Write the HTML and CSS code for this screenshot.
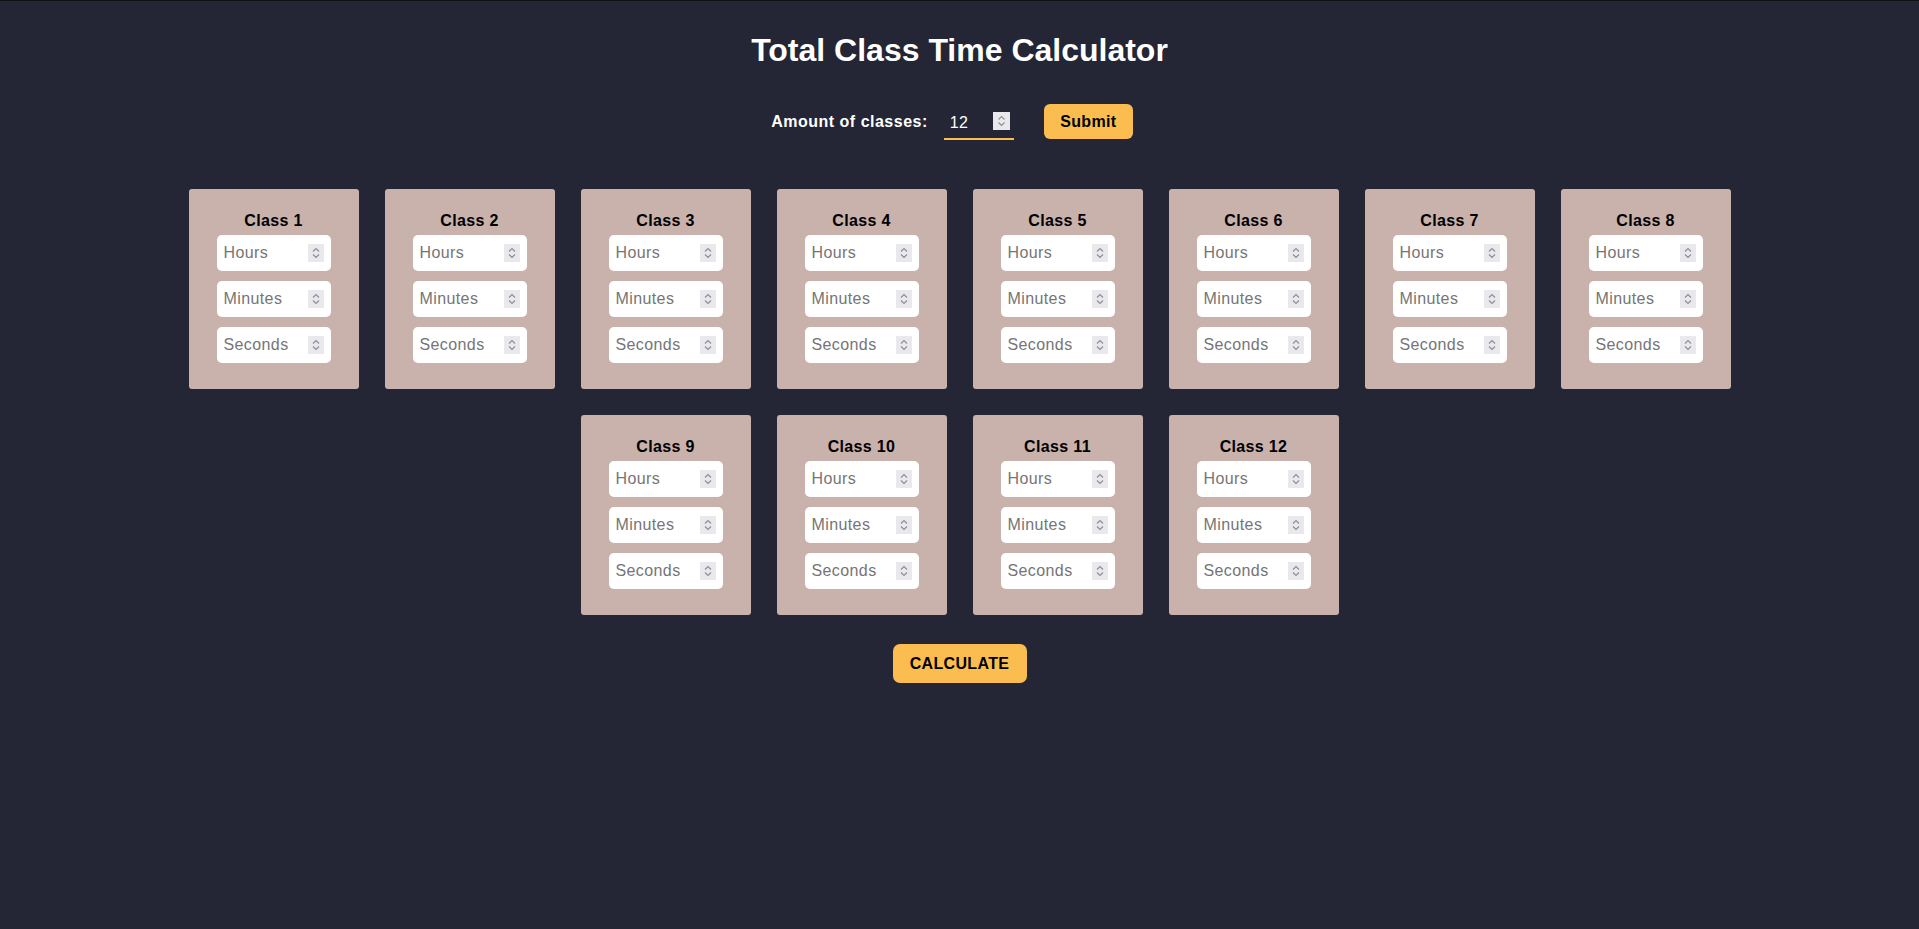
FILE: index.html
```html
<!DOCTYPE html>
<html lang="en">
<head>
<meta charset="utf-8">
<title>Total Class Time Calculator</title>
<link rel="stylesheet" href="styles.css">
</head>
<body>
<main class="app">
  <h1 class="title">Total Class Time Calculator</h1>
  <form class="amount-row">
    <label class="amount-label" for="amount">Amount of classes:</label>
    <span class="field amount-field">
      <input class="amount-input" id="amount" type="number" value="12">
      <span class="spin spin-amount"><svg viewBox="0 0 17 18" width="17" height="18"><path d="M5.5 7.5 8.5 4.5l3 3M5.5 10.5l3 3 3-3"/></svg></span>
    </span>
    <button class="btn btn-submit" type="button">Submit</button>
  </form>
  <section class="cards" id="cards"></section>
  <div class="actions">
    <button class="btn btn-calc" type="button">CALCULATE</button>
  </div>
</main>
<script src="script.js"></script>
</body>
</html>
```

FILE: script.js
```js
(function () {
  var cards = document.getElementById('cards');
  var labels = ['Hours', 'Minutes', 'Seconds'];
  var spin = '<span class="spin"><svg viewBox="0 0 16 18" width="16" height="18"><path d="M5 7.5 8 4.5l3 3M5 10.5l3 3 3-3"/></svg></span>';
  var html = '';
  for (var i = 1; i <= 12; i++) {
    html += '<div class="card"><div class="card-title">Class ' + i + '</div>';
    for (var j = 0; j < labels.length; j++) {
      html += '<span class="field"><input class="time-input" type="number" placeholder="' + labels[j] + '">' + spin + '</span>';
    }
    html += '</div>';
  }
  cards.innerHTML = html;
})();
```

FILE: styles.css
```css
html {
  background: #242535;
  border-top: 1px solid #101015;
}

body {
  margin: 0;
  font-family: "Liberation Sans", Arial, sans-serif;
  color: #ffffff;
}

.app {
  display: flex;
  flex-direction: column;
  align-items: center;
  padding-top: 31px;
}

.title {
  margin: 0;
  font-size: 32px;
  font-weight: 700;
  line-height: 37px;
}

.amount-row {
  display: flex;
  align-items: center;
  margin-top: 35px;
  height: 35px;
  padding-right: 15px;
}

.amount-label {
  font-size: 16px;
  font-weight: 700;
  letter-spacing: 0.5px;
  margin-right: 16px;
}

.field {
  position: relative;
  display: block;
}

.amount-field {
  margin-right: 30px;
  margin-top: 4px;
}

.amount-input {
  display: block;
  box-sizing: border-box;
  width: 70px;
  height: 32px;
  padding: 0 5px 0 6px;
  background: transparent;
  border: none;
  border-bottom: 2px solid #fbbd4f;
  color: #ffffff;
  font-family: "Liberation Sans", Arial, sans-serif;
  font-size: 16px;
  letter-spacing: 0.4px;
  outline: none;
}

.amount-input::-webkit-inner-spin-button,
.amount-input::-webkit-outer-spin-button,
.time-input::-webkit-inner-spin-button,
.time-input::-webkit-outer-spin-button {
  -webkit-appearance: none;
  margin: 0;
}

.spin {
  position: absolute;
  right: 7px;
  top: 9px;
  width: 16px;
  height: 18px;
  background: #e9e9ed;
  pointer-events: none;
}

.spin svg {
  display: block;
  fill: none;
  stroke: #8e8e96;
  stroke-width: 1.2;
}

.spin-amount {
  right: 4px;
  top: 4px;
  width: 17px;
}

.btn {
  background: #fbbd4f;
  color: #000000;
  border: none;
  font-family: "Liberation Sans", Arial, sans-serif;
  font-size: 16px;
  font-weight: 700;
  letter-spacing: 0.35px;
  cursor: pointer;
}

.btn-submit {
  height: 35px;
  width: 89px;
  padding: 0;
  border-radius: 6px;
}

.cards {
  display: flex;
  flex-wrap: wrap;
  justify-content: center;
  gap: 26px;
  width: 1600px;
  max-width: 100%;
  margin-top: 50px;
}

.card {
  box-sizing: border-box;
  width: 170px;
  height: 200px;
  padding: 23px 0 26px;
  background: #c9b1ac;
  border-radius: 3px;
  display: flex;
  flex-direction: column;
  align-items: center;
}

.card-title {
  color: #000000;
  font-size: 16px;
  font-weight: 700;
  letter-spacing: 0.35px;
  line-height: 18px;
  margin-bottom: 5px;
}

.time-input {
  display: block;
  box-sizing: border-box;
  width: 114px;
  height: 36px;
  padding: 0 24px 0 7px;
  border: none;
  border-radius: 5px;
  background: #ffffff;
  font-family: "Liberation Sans", Arial, sans-serif;
  font-size: 16px;
  letter-spacing: 0.4px;
  color: #000000;
  outline: none;
}

.field + .field {
  margin-top: 10px;
}

.time-input::placeholder {
  color: #757575;
}

.actions {
  margin-top: 29px;
}

.btn-calc {
  width: 134px;
  height: 39px;
  padding: 0;
  border-radius: 7px;
}
```
